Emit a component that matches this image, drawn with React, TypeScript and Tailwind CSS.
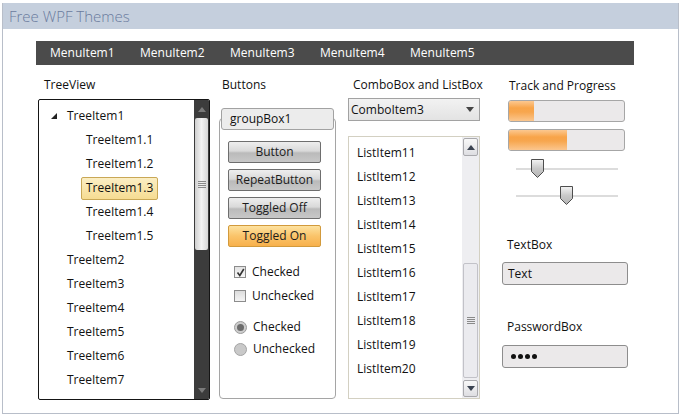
import React from "react";

const metalBtn =
  "flex h-[22px] items-center justify-center rounded-[2px] border border-[#6e6e6e] bg-[linear-gradient(180deg,#eeeeee_0%,#d9d9d9_45%,#bababa_55%,#c8c8c8_100%)] text-[12px] text-[#1c1c1c]";

function Grip() {
  return (
    <div className="flex flex-col gap-[1px]">
      <div className="h-px w-[8px] bg-[#8a8a8a]" />
      <div className="h-px w-[8px] bg-[#8a8a8a]" />
      <div className="h-px w-[8px] bg-[#8a8a8a]" />
      <div className="h-px w-[8px] bg-[#8a8a8a]" />
    </div>
  );
}

function Arrow({ down, color }: { down?: boolean; color: string }) {
  return (
    <svg width="8" height="5" viewBox="0 0 8 5">
      <polygon points={down ? "0,0 8,0 4,5" : "0,5 8,5 4,0"} fill={color} />
    </svg>
  );
}

function TreeView() {
  const tops = ["TreeItem2", "TreeItem3", "TreeItem4", "TreeItem5", "TreeItem6", "TreeItem7"];
  const kids = ["TreeItem1.1", "TreeItem1.2", "TreeItem1.3", "TreeItem1.4", "TreeItem1.5"];
  return (
    <div className="flex h-[301px] w-[172px] overflow-hidden rounded-[2px] border border-[#151515] bg-white">
      <div className="flex-1 pt-[4px]">
        <div className="flex h-[24px] items-center pl-[12px]">
          <svg width="6" height="6" viewBox="0 0 6 6">
            <polygon points="6,0 6,6 0,6" fill="#222" />
          </svg>
          <span className="ml-[10px]">TreeItem1</span>
        </div>
        {kids.map((k) => (
          <div key={k} className="flex h-[24px] items-center pl-[42px]">
            <span
              className={
                k === "TreeItem1.3"
                  ? "flex h-[23px] items-center rounded-[2px] border border-[#c9a856] bg-[linear-gradient(180deg,#fbeec4_0%,#f6dc92_100%)] px-[4px]"
                  : "flex h-[23px] items-center border border-transparent px-[4px]"
              }
            >
              {k}
            </span>
          </div>
        ))}
        {tops.map((t) => (
          <div key={t} className="flex h-[24px] items-center pl-[28px]">
            {t}
          </div>
        ))}
      </div>
      <div className="flex w-[15px] flex-col bg-[#3c3c3c]">
        <div className="flex h-[18px] items-center justify-center">
          <Arrow color="#7a7a7a" />
        </div>
        <div className="mx-[1px] flex h-[132px] items-center justify-center rounded-[2px] bg-[linear-gradient(90deg,#cfcfcf_0%,#f3f3f3_50%,#d6d6d6_100%)]">
          <Grip />
        </div>
        <div className="flex-1" />
        <div className="flex h-[18px] items-center justify-center">
          <Arrow down color="#7a7a7a" />
        </div>
      </div>
    </div>
  );
}

function ButtonsGroup() {
  return (
    <div className="flex flex-col">
      <div className="relative z-10 mx-[2px] flex h-[22px] items-center rounded-[3px] border border-[#a2a2a2] bg-[#ececec] pl-[8px]">
        groupBox1
      </div>
      <div className="-mt-[12px] h-[281px] rounded-[4px] border border-[#a5a5a5] bg-white px-[8px] pt-[22px]">
        <div className="flex w-[93px] flex-col gap-[6px]">
          <div className={metalBtn}>Button</div>
          <div className={metalBtn}>RepeatButton</div>
          <div className={metalBtn}>Toggled Off</div>
          <div className="flex h-[22px] items-center justify-center rounded-[2px] border border-[#d29a3c] bg-[linear-gradient(180deg,#fde2a0_0%,#fac46a_50%,#f7b04c_100%)] text-[12px] text-[#1c1c1c]">
            Toggled On
          </div>
        </div>
        <div className="mt-[13px] flex h-[24px] items-center pl-[6px]">
          <div className="flex h-[12px] w-[12px] items-center justify-center border border-[#8c8c8c] bg-[linear-gradient(180deg,#e2e2e2_0%,#f7f7f7_100%)]">
            <svg width="9" height="9" viewBox="0 0 9 9">
              <path d="M1.5 4.5 L3.8 7.5 L7.8 1" stroke="#333" strokeWidth="1.6" fill="none" />
            </svg>
          </div>
          <span className="ml-[6px]">Checked</span>
        </div>
        <div className="flex h-[24px] items-center pl-[6px]">
          <div className="h-[12px] w-[12px] border border-[#8c8c8c] bg-[linear-gradient(180deg,#dcdcdc_0%,#f4f4f4_100%)]" />
          <span className="ml-[6px]">Unchecked</span>
        </div>
        <div className="mt-[8px] flex h-[22px] items-center pl-[6px]">
          <div className="flex h-[13px] w-[13px] items-center justify-center rounded-full border border-[#9c9c9c] bg-[#cdcdcd]">
            <div className="h-[7px] w-[7px] rounded-full bg-[#6c6c6c]" />
          </div>
          <span className="ml-[6px]">Checked</span>
        </div>
        <div className="flex h-[22px] items-center pl-[6px]">
          <div className="h-[13px] w-[13px] rounded-full border border-[#a4a4a4] bg-[#c9c9c9]" />
          <span className="ml-[6px]">Unchecked</span>
        </div>
      </div>
    </div>
  );
}

function ListBox() {
  const items = Array.from({ length: 10 }, (_, i) => `ListItem${i + 11}`);
  return (
    <div className="flex h-[263px] w-[132px] border border-[#d3d0c2] bg-white">
      <div className="flex-1 pt-[4px] pl-[8px]">
        {items.map((it) => (
          <div key={it} className="flex h-[24px] items-center">
            {it}
          </div>
        ))}
      </div>
      <div className="flex w-[17px] flex-col bg-[#eeeef1] p-[1px]">
        <div className="flex h-[18px] items-center justify-center rounded-[2px] border border-[#a9a9ad] bg-[linear-gradient(180deg,#f8f8f8_0%,#dedee2_100%)]">
          <Arrow color="#3a4250" />
        </div>
        <div className="h-[107px]" />
        <div className="flex h-[115px] items-center justify-center rounded-[2px] border border-[#c2c2c8] bg-[#ebebef]">
          <Grip />
        </div>
        <div className="flex-1" />
        <div className="flex h-[17px] items-center justify-center rounded-[2px] border border-[#a9a9ad] bg-[linear-gradient(180deg,#f8f8f8_0%,#dedee2_100%)]">
          <Arrow down color="#3a4250" />
        </div>
      </div>
    </div>
  );
}

function Progress({ fill }: { fill: string }) {
  return (
    <div className="ml-[6px] h-[22px] w-[117px] overflow-hidden rounded-[3px] border border-[#a6a6a6] bg-[#ebe9ea]">
      <div className={`h-full ${fill} bg-[linear-gradient(180deg,#fcc890_0%,#f8a449_35%,#f7a64e_55%,#fbc68e_100%)]`} />
    </div>
  );
}

function Slider({ thumb }: { thumb: string }) {
  return (
    <div className="relative ml-[14px] h-[19px] w-[102px]">
      <div className="absolute left-0 right-0 top-[9px] h-[2px] bg-[#dcdcdc]" />
      <svg className={`absolute top-0 ${thumb}`} width="13" height="19" viewBox="0 0 13 19">
        <defs>
          <linearGradient id="tg" x1="0" y1="0" x2="0" y2="1">
            <stop offset="0" stopColor="#f4f4f4" />
            <stop offset="0.5" stopColor="#c9c9c9" />
            <stop offset="1" stopColor="#b4b4b4" />
          </linearGradient>
        </defs>
        <polygon points="0.5,0.5 12.5,0.5 12.5,12.5 6.5,18.5 0.5,12.5" fill="url(#tg)" stroke="#4e4e4e" />
      </svg>
    </div>
  );
}

export default function App() {
  const menus = ["MenuItem1", "MenuItem2", "MenuItem3", "MenuItem4", "MenuItem5"];
  return (
    <div className="h-[420px] w-[683px] bg-white pl-[2px] pt-[3px] font-['Open_Sans','Noto_Sans',sans-serif] text-[12px] text-[#111]">
      <div className="h-[411px] w-[677px] border border-t-0 border-[#b8bec9]">
        <div className="flex h-[26px] items-center bg-[#c5cfdd] pl-[6px] text-[15px] font-light text-[#6a7b9e]">
          Free WPF Themes
        </div>
        <div className="ml-[33px] mt-[12px] flex h-[24px] w-[598px] items-center bg-[#4b4b4b] pl-[14px] text-white">
          {menus.map((m) => (
            <div key={m} className="w-[90px]">
              {m}
            </div>
          ))}
        </div>
        <div className="ml-[35px] mt-[12px] flex items-start">
          <div className="flex w-[172px] flex-col">
            <div className="flex h-[16px] items-center pl-[6px]">TreeView</div>
            <div className="mt-[6px]">
              <TreeView />
            </div>
          </div>
          <div className="ml-[9px] flex w-[117px] flex-col">
            <div className="flex h-[16px] items-center pl-[3px]">Buttons</div>
            <div className="mt-[15px]">
              <ButtonsGroup />
            </div>
          </div>
          <div className="ml-[12px] flex w-[132px] flex-col">
            <div className="flex h-[16px] items-center whitespace-nowrap pl-[5px]">ComboBox and ListBox</div>
            <div className="mt-[5px] flex h-[23px] items-center justify-between border border-[#a2a2a2] bg-[linear-gradient(180deg,#f2f2f2_0%,#e3e3e3_100%)] pl-[2px] pr-[5px]">
              <span>ComboItem3</span>
              <Arrow down color="#444" />
            </div>
            <div className="mt-[15px]">
              <ListBox />
            </div>
          </div>
          <div className="ml-[22px] flex w-[127px] flex-col">
            <div className="mt-[1px] flex h-[16px] items-center pl-[7px]">Track and Progress</div>
            <div className="mt-[6px]">
              <Progress fill="w-[25px]" />
            </div>
            <div className="mt-[7px]">
              <Progress fill="w-[58px]" />
            </div>
            <div className="mt-[8px]">
              <Slider thumb="left-[15px]" />
            </div>
            <div className="mt-[8px]">
              <Slider thumb="left-[44px]" />
            </div>
            <div className="mt-[32px] flex h-[16px] items-center pl-[5px]">TextBox</div>
            <div className="mt-[9px] flex h-[23px] w-[126px] items-center rounded-[3px] border border-[#8d8d8d] bg-[#ebe9ea] pl-[5px]">
              Text
            </div>
            <div className="mt-[34px] flex h-[16px] items-center pl-[5px]">PasswordBox</div>
            <div className="mt-[10px] flex h-[23px] w-[126px] items-center gap-[2px] rounded-[3px] border border-[#8d8d8d] bg-[#ebe9ea] pl-[8px]">
              <div className="h-[5px] w-[5px] rounded-full bg-[#111]" />
              <div className="h-[5px] w-[5px] rounded-full bg-[#111]" />
              <div className="h-[5px] w-[5px] rounded-full bg-[#111]" />
              <div className="h-[5px] w-[5px] rounded-full bg-[#111]" />
            </div>
          </div>
        </div>
      </div>
    </div>
  );
}
